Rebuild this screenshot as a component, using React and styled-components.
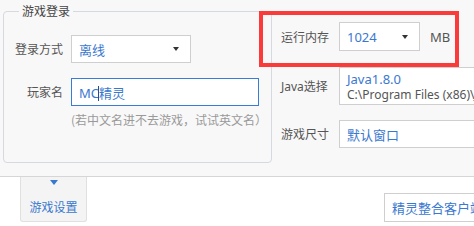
import React from "react";
import styled, { createGlobalStyle } from "styled-components";

const GlobalStyle = createGlobalStyle`
  html, body {
    margin: 0;
    padding: 0;
    background: #ffffff;
    overflow: hidden;
  }
  body {
    font-family: "Noto Sans", "Noto Sans CJK SC", sans-serif;
    width: 474px;
    height: 226px;
  }
`;

const Page = styled.div`
  width: 474px;
  height: 226px;
  overflow: hidden;
`;

const TopPanel = styled.div`
  position: relative;
  display: flex;
  height: 177px;
  background: #f8f8f8;
  border-bottom: 1px solid #d6d6d6;
  box-sizing: border-box;
  overflow: hidden;
`;

const Group = styled.fieldset`
  flex: none;
  margin: 4px 0 0 3px;
  padding: 17px 0 0 11px;
  width: 269px;
  height: 159px;
  min-width: 0;
  box-sizing: border-box;
  border: 1px solid #d4dae0;
  border-radius: 4px;
  display: flex;
  flex-direction: column;
`;

const Legend = styled.legend`
  margin-left: 4px;
  padding: 0 3px;
  font-size: 12px;
  line-height: 14px;
  color: #444;
  font-family: "Noto Sans CJK SC", sans-serif;
`;

const Row = styled.div`
  display: flex;
  align-items: center;
  gap: ${(p) => p.$gap || 8}px;
  margin-top: ${(p) => p.$top || 0}px;
`;

const Label = styled.span`
  width: ${(p) => p.$w || 48}px;
  flex: none;
  text-align: ${(p) => p.$align || "right"};
  font-size: 12px;
  color: #555;
  font-family: "Noto Sans", "Noto Sans CJK SC", sans-serif;
  white-space: nowrap;
`;

const Box = styled.div`
  flex: none;
  display: flex;
  align-items: center;
  width: ${(p) => p.$w}px;
  height: ${(p) => p.$h || 28}px;
  box-sizing: border-box;
  padding: 0 7px;
  background: #fff;
  border: 1px solid ${(p) => (p.$focus ? "#3a7bd5" : "#cfcfcf")};
  font-size: 13px;
  color: #3a78cf;
  white-space: nowrap;
  overflow: hidden;
`;

const Value = styled.span`
  flex: 1;
`;

const Caret = styled.span`
  display: inline-block;
  width: 0;
  height: 15px;
  margin-left: -1px;
  border-left: 1px solid #1f4f94;
  vertical-align: -3px;
`;

const DropArrow = styled.span`
  width: 0;
  height: 0;
  margin-right: 4px;
  border-left: 3.5px solid transparent;
  border-right: 3.5px solid transparent;
  border-top: 4px solid #333;
`;

const Hint = styled.div`
  margin: 5px 0 0 56px;
  font-size: 12px;
  color: #9a9a9a;
  white-space: nowrap;
  font-family: "Noto Sans CJK SC", sans-serif;
`;

const RightCol = styled.div`
  flex: none;
  display: flex;
  flex-direction: column;
  padding: 22px 0 0 9px;
`;

const Unit = styled.span`
  margin-left: 1px;
  font-size: 13px;
  color: #555;
`;

const JavaBox = styled(Box)`
  flex-direction: column;
  align-items: flex-start;
  justify-content: center;
  padding-top: 1px;
`;

const JavaName = styled.span`
  font-size: 13px;
  line-height: 16px;
  color: #3a78cf;
`;

const JavaPath = styled.span`
  font-size: 12px;
  line-height: 16px;
  color: #555;
`;

const Highlight = styled.div`
  position: absolute;
  left: 259px;
  top: 11px;
  width: 200px;
  height: 56px;
  box-sizing: border-box;
  border: 4px solid #fb3a3a;
  pointer-events: none;
`;

const BottomBar = styled.div`
  display: flex;
  align-items: flex-start;
`;

const Tab = styled.div`
  flex: none;
  margin-left: 20px;
  width: 67px;
  height: 45px;
  box-sizing: border-box;
  background: #f4f4f4;
  border: 1px solid #e0e0e0;
  border-top: none;
  border-radius: 0 0 3px 3px;
  display: flex;
  flex-direction: column;
  align-items: center;
  font-family: "Noto Sans CJK SC", sans-serif;
  font-size: 12px;
  color: #3a78cf;
`;

const TabArrow = styled.span`
  margin-top: 3px;
  width: 0;
  height: 0;
  border-left: 4.5px solid transparent;
  border-right: 4.5px solid transparent;
  border-top: 5px solid #3a78cf;
`;

const TabText = styled.span`
  margin-top: 15px;
  line-height: 14px;
  white-space: nowrap;
`;

const ClientButton = styled.div`
  flex: none;
  margin: 16px 0 0 297px;
  width: 110px;
  height: 29px;
  box-sizing: border-box;
  border: 1px solid #cfcfcf;
  background: #fff;
  padding-left: 7px;
  display: flex;
  align-items: center;
  font-family: "Noto Sans CJK SC", sans-serif;
  font-size: 13px;
  color: #3a78cf;
  white-space: nowrap;
  overflow: hidden;
`;

export default function App() {
  return (
    <Page>
      <GlobalStyle />
      <TopPanel>
        <Group>
          <Legend>游戏登录</Legend>
          <Row>
            <Label>登录方式</Label>
            <Box $w={120}>
              <Value>离线</Value>
              <DropArrow />
            </Box>
          </Row>
          <Row $top={15}>
            <Label>玩家名</Label>
            <Box $w={188} $focus>
              <Value>
                MC<Caret />精灵
              </Value>
            </Box>
          </Row>
          <Hint>(若中文名进不去游戏，试试英文名）</Hint>
        </Group>
        <RightCol>
          <Row $gap={9}>
            <Label $w={49} $align="left">运行内存</Label>
            <Box $w={81} $h={29}>
              <Value>1024</Value>
              <DropArrow />
            </Box>
            <Unit>MB</Unit>
          </Row>
          <Row $gap={9} $top={16}>
            <Label $w={49} $align="left">Java选择</Label>
            <JavaBox $w={160} $h={38}>
              <JavaName>Java1.8.0</JavaName>
              <JavaPath>C:\Program Files (x86)\Java\jre1.8.0</JavaPath>
            </JavaBox>
          </Row>
          <Row $gap={9} $top={15}>
            <Label $w={49} $align="left">游戏尺寸</Label>
            <Box $w={160}>
              <Value>默认窗口</Value>
            </Box>
          </Row>
        </RightCol>
        <Highlight />
      </TopPanel>
      <BottomBar>
        <Tab>
          <TabArrow />
          <TabText>游戏设置</TabText>
        </Tab>
        <ClientButton>精灵整合客户端</ClientButton>
      </BottomBar>
    </Page>
  );
}
